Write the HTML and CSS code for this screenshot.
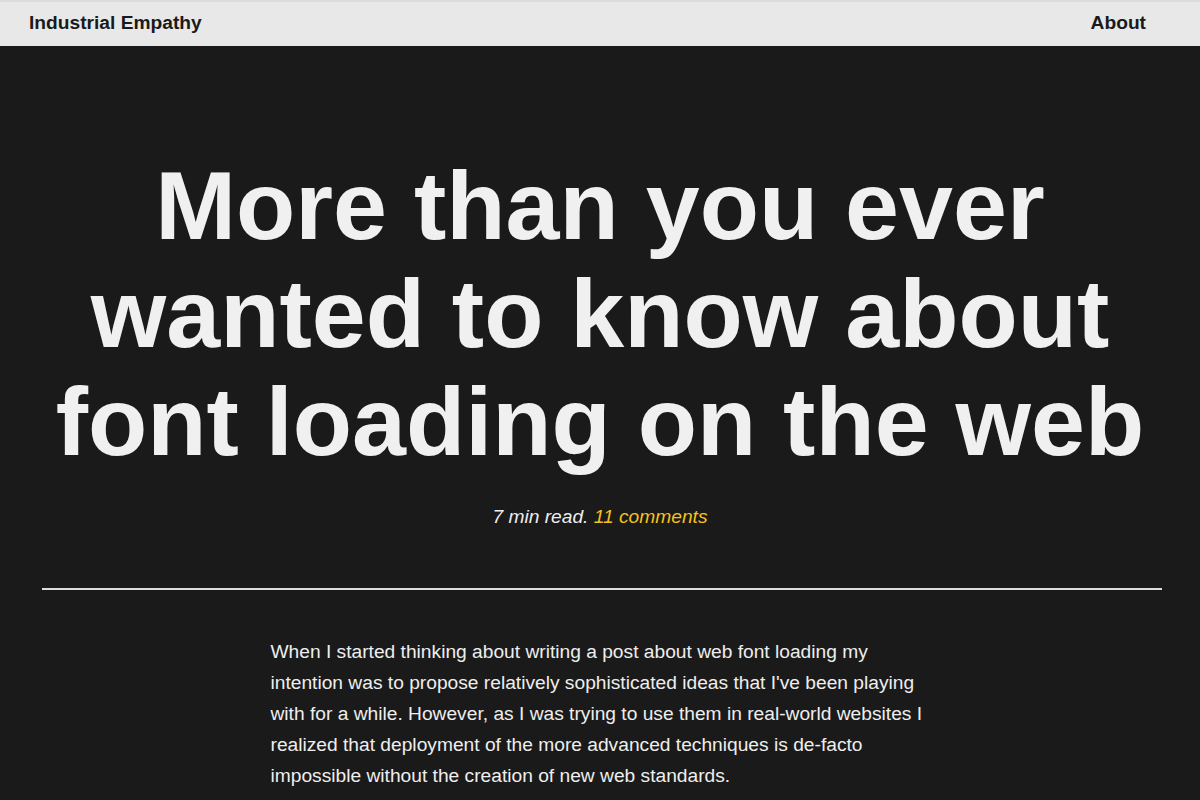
FILE: index.html
```html
<!DOCTYPE html>
<html lang="en">
<head>
<meta charset="utf-8">
<title>More than you ever wanted to know about font loading on the web</title>
<link rel="stylesheet" href="styles.css">
</head>
<body>
<header class="site-header">
  <a class="brand" href="#">Industrial Empathy</a>
  <nav class="nav"><a href="#">About</a></nav>
</header>
<main>
  <h1 class="title">More than you ever wanted to know about font loading on the web</h1>
  <p class="meta">7 min read. <a href="#">11 comments</a></p>
  <hr class="rule">
  <article class="post">
    <p>When I started thinking about writing a post about web font loading my intention was to propose relatively sophisticated ideas that I've been playing with for a while. However, as I was trying to use them in real-world websites I realized that deployment of the more advanced techniques is de-facto impossible without the creation of new web standards.</p>
  </article>
</main>
</body>
</html>
```
FILE: styles.css
```css
html, body {
  margin: 0;
  padding: 0;
}
body {
  background: #1a1a1a;
  color: #eeeeee;
  font-family: "Liberation Sans", Arial, sans-serif;
}
a {
  text-decoration: none;
}
.site-header {
  background: #e8e8e8;
  border-top: 2px solid #dcdcdc;
  height: 44px;
  display: flex;
  align-items: center;
  justify-content: space-between;
  padding: 0 54px 2px 29px;
  box-sizing: border-box;
  height: 46px;
}
.site-header a {
  color: #1a1a1a;
  font-weight: bold;
  font-size: 19.2px;
}
.title {
  margin: 106px 0 0;
  text-align: center;
  font-size: 97px;
  line-height: 108px;
  font-weight: bold;
  color: #f0f0f0;
  padding: 0 20px;
}
.meta {
  margin: 27px 0 0;
  text-align: center;
  font-style: italic;
  font-size: 19.2px;
  line-height: 28.5px;
  color: #eeeeee;
}
.meta a {
  color: #f4c21b;
}
.rule {
  border: 0;
  height: 2px;
  background: #dddddd;
  margin: 56px 38px 0 42px;
}
.post {
  max-width: 660px;
  margin: 0 auto;
  padding: 46px 0 0 1px;
}
.post p {
  margin: 0;
  font-size: 19.2px;
  line-height: 31px;
  color: #eeeeee;
}
```
